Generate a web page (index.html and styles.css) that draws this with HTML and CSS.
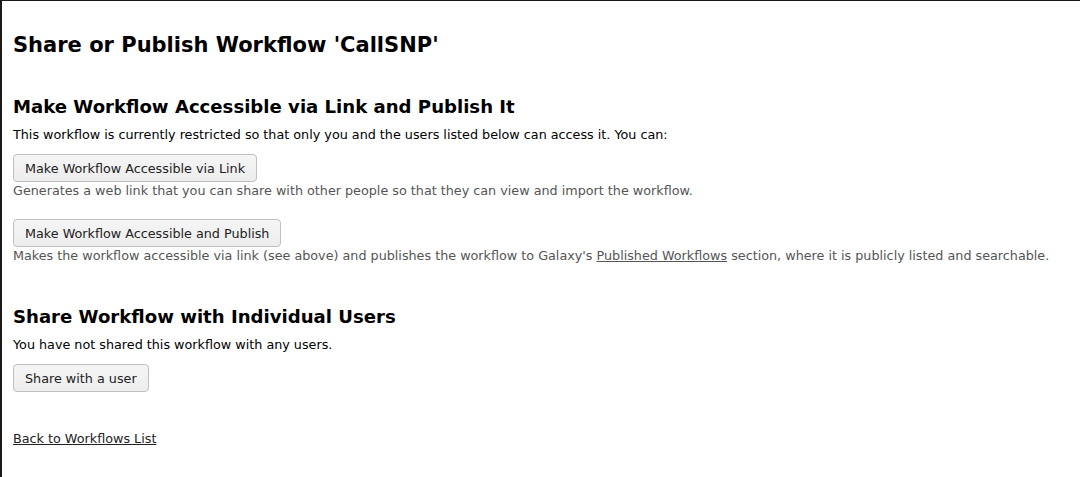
FILE: index.html
```html
<!DOCTYPE html>
<html>
<head>
<meta charset="utf-8">
<link rel="stylesheet" href="styles.css">
</head>
<body>
<div class="page">
  <h1 class="title">Share or Publish Workflow 'CallSNP'</h1>
  <h2 class="section-title first">Make Workflow Accessible via Link and Publish It</h2>
  <p class="text">This workflow is currently restricted so that only you and the users listed below can access it. You can:</p>
  <div class="action">
    <button class="btn">Make Workflow Accessible via Link</button>
    <div class="hint">Generates a web link that you can share with other people so that they can view and import the workflow.</div>
  </div>
  <div class="action">
    <button class="btn">Make Workflow Accessible and Publish</button>
    <div class="hint">Makes the workflow accessible via link (see above) and publishes the workflow to Galaxy's <a href="#" class="hint-link">Published Workflows</a> section, where it is publicly listed and searchable.</div>
  </div>
  <h2 class="section-title second">Share Workflow with Individual Users</h2>
  <p class="text">You have not shared this workflow with any users.</p>
  <div class="action">
    <button class="btn">Share with a user</button>
  </div>
  <a href="#" class="back">Back to Workflows List</a>
</div>
</body>
</html>
```
FILE: styles.css
```css
html, body {
  margin: 0;
  padding: 0;
  background: #fff;
}
body {
  font-family: "DejaVu Sans", Verdana, sans-serif;
  font-size: 12.75px;
  color: #000;
}
.page {
  box-sizing: border-box;
  height: 477px;
  border-top: 1px solid #1a1a1a;
  border-left: 2px solid #1a1a1a;
  padding: 29px 11px 0;
  display: flex;
  flex-direction: column;
  align-items: flex-start;
}
.title {
  font-size: 21px;
  font-weight: bold;
  margin: 0;
  line-height: 30px;
}
.section-title {
  font-size: 18.1px;
  font-weight: bold;
  margin: 0;
  line-height: 24px;
}
.section-title.first { margin-top: 35px; }
.section-title.second { margin-top: 21px; }
.text {
  margin: 8px 0 11px;
  line-height: 16px;
}
.action {
  display: flex;
  flex-direction: column;
  align-items: flex-start;
  margin-bottom: 20px;
}
.btn {
  font-family: inherit;
  font-size: 12.75px;
  color: #222;
  background: linear-gradient(#f5f5f5, #ededed);
  border: 1px solid #c0c0c0;
  border-radius: 4px;
  height: 28px;
  padding: 0 11px;
  margin: 0;
}
.hint {
  color: #555;
  line-height: 16px;
  margin-top: 1px;
}
.hint-link {
  color: #555;
}
.back {
  color: #222;
  margin-top: 19px;
  line-height: 16px;
}
```
